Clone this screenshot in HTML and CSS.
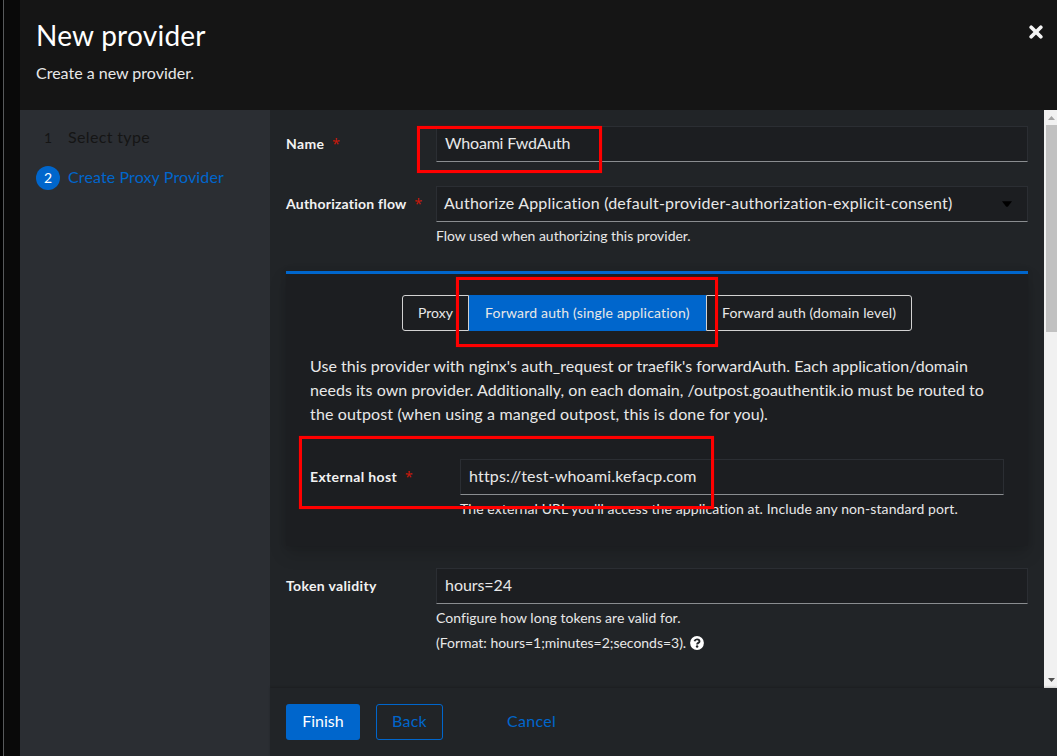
FILE: index.html
```html
<!DOCTYPE html>
<html lang="en">
<head>
<meta charset="utf-8">
<title>New provider</title>
<link rel="stylesheet" href="styles.css">
</head>
<body>
<div class="modal">
  <header class="header">
    <div>
      <h1 class="title">New provider</h1>
      <p class="subtitle">Create a new provider.</p>
    </div>
    <button class="close" aria-label="Close">
      <svg width="14" height="14" viewBox="0 0 14 14"><path d="M2.2 2.2 11.8 11.8M11.8 2.2 2.2 11.8" stroke="#f4f4f4" stroke-width="3.7" stroke-linecap="round"/></svg>
    </button>
  </header>
  <div class="body">
    <nav class="steps">
      <div class="step"><span class="num">1</span><span class="step-name ls-select">Select type</span></div>
      <div class="step current"><span class="num">2</span><span class="step-name ls-create">Create Proxy Provider</span></div>
    </nav>
    <section class="main">
      <div class="scroller">
        <form class="form">
          <div class="row">
            <label class="label ls-wide">Name<i class="req">*</i></label>
            <div class="control"><div class="input ls-whoami">Whoami FwdAuth</div></div>
          </div>
          <div class="row flow">
            <label class="label ls-mid">Authorization flow<i class="req">*</i></label>
            <div class="control">
              <div class="input select ls-authorize"><span>Authorize Application (default-provider-authorization-explicit-consent)</span>
                <svg class="caret" width="10" height="6" viewBox="0 0 10 6"><path d="M0 0.3h10L6 5.4Q5 6.3 4 5.4z" fill="#000"/></svg>
              </div>
              <p class="help ls-flow">Flow used when authorizing this provider.</p>
            </div>
          </div>
          <div class="card">
            <div class="toggle">
              <span class="item">Proxy</span><span class="item selected">Forward auth (single application)</span><span class="item last">Forward auth (domain level)</span>
            </div>
            <p class="description"><span class="ls-line1">Use this provider with nginx's auth_request or traefik's forwardAuth. Each application/domain</span><br><span class="ls-line2">needs its own provider. Additionally, on each domain, /outpost.goauthentik.io must be routed to</span><br><span class="ls-line3">the outpost (when using a manged outpost, this is done for you).</span></p>
            <div class="row">
              <label class="label ls-wide">External host<i class="req">*</i></label>
              <div class="control"><div class="input ls-host">https://test-whoami.kefacp.com</div>
              <p class="help ls-url">The external URL you'll access the application at. Include any non-standard port.</p></div>
            </div>
          </div>
          <div class="row">
            <label class="label ls-wide">Token validity</label>
            <div class="control">
              <div class="input ls-hours">hours=24</div>
              <p class="help ls-config">Configure how long tokens are valid for.</p>
              <p class="help format"><span>(Format: hours=1;minutes=2;seconds=3).</span>
                <svg width="14" height="14" viewBox="0 0 14 14"><circle cx="7" cy="7" r="6.9" fill="#fff"/><path d="M4.5 5.3C4.900 4 5.800 3.400 7 3.400c1.400 0 2.500.8 2.500 2C9.500 6.900 7.100 6.900 7.100 8.400" fill="none" stroke="#212427" stroke-width="1.900"/><circle cx="7.100" cy="10.400" r="1.250" fill="#212427"/></svg>
              </p>
            </div>
          </div>
        </form>
        <div class="scrollbar">
          <svg class="arrow" width="13" height="15" viewBox="0 0 13 15"><path d="M4 10 7.500 6 11 10z" fill="#a3a3a3"/></svg>
          <div class="thumb"></div>
          <svg class="arrow" width="13" height="15" viewBox="0 0 13 15"><path d="M4 5 7.500 9 11 5z" fill="#505050"/></svg>
        </div>
      </div>
      <footer class="footer">
        <button class="btn primary">Finish</button>
        <button class="btn secondary">Back</button>
        <button class="btn link">Cancel</button>
      </footer>
    </section>
  </div>
</div>
<div class="mark mark-name"></div>
<div class="mark mark-mode"></div>
<div class="mark mark-host"></div>
</body>
</html>
```
FILE: styles.css
```css
* { box-sizing: border-box; }
body {
  margin: 0;
  width: 1057px;
  height: 756px;
  overflow: hidden;
  display: flex;
  position: relative;
  background: linear-gradient(90deg, #000 3px, #57595b 3px 4px, #090909 4px);
  color: #e8e8e8;
  font: 16px/24px Lato, "Open Sans", sans-serif;
}
h1, p { margin: 0; font-weight: 400; }
button { font: inherit; border: 0; background: none; padding: 0; }
svg { display: block; flex: none; }

.modal { margin-left: 20px; flex: 1; display: flex; flex-direction: column; background: #212427; }
.header {
  height: 110px;
  padding: 14px 14px 0 16px;
  display: flex;
  justify-content: space-between;
  align-items: flex-start;
  background: #151515;
}
.title { font-size: 28px; line-height: 42px; color: #fff; letter-spacing: 0.25px; }
.subtitle { padding-top: 5px; }
.close { margin-top: 11px; }

.body { flex: 1; display: flex; min-height: 0; }
.steps { width: 250px; background: #2b2e33; padding: 16px; display: flex; flex-direction: column; gap: 16px; }
.step { display: flex; gap: 8px; color: #151515; height: 24px; }
.step-name { line-height: 22px; }
.num { width: 24px; height: 24px; border-radius: 50%; text-align: center; font-size: 14px; }
.current { color: #06c; }
.current .num { background: #06c; color: #fff; }

.main { flex: 1; display: flex; flex-direction: column; min-width: 0; }
.scroller { height: 578px; display: flex; }
.form { flex: 1; padding: 16px 16px 0; overflow: hidden; }
.row { display: grid; grid-template-columns: 150px 1fr; }
.flow { margin-top: 24px; }
.label { font-size: 14px; line-height: 21px; font-weight: 700; color: #f2f2f2; padding-top: 7px; }
.req { color: #c9190b; font: 400 14px/14px "Noto Sans", sans-serif; margin-left: 8px; }
.input {
  height: 36px;
  padding: 4px 8px;
  line-height: 24px;
  background: #1c1e21;
  border: 1px solid #2b2e33;
  border-bottom-color: #8a8d90;
}
.select { display: flex; align-items: flex-start; justify-content: space-between; padding: 4px 15px 4px 7px; }
.caret { margin-top: 10px; }
.help { font-size: 14px; line-height: 21px; padding: 3px 0 1px; }
.format { display: flex; align-items: center; gap: 4px; letter-spacing: -0.02px; }
.card {
  height: 275px;
  margin: 24px 0 22px;
  padding: 21px 24px 0;
  border-top: 3px solid #06c;
  background: #1c1e21;
  box-shadow: 0 8px 16px rgba(3, 3, 3, 0.16), 0 0 6px rgba(3, 3, 3, 0.08);
}
.toggle { display: flex; padding-left: 92px; font-size: 14px; }
.item { height: 36px; line-height: 34px; border: 1px solid #d2d2d2; padding: 0 15px; width: 67px; border-radius: 3px 0 0 3px; white-space: nowrap; }
.selected { width: 237px; background: #06c; border-color: #06c; border-radius: 0; letter-spacing: 0.19px; }
.last { width: 206px; border-radius: 0 3px 3px 0; letter-spacing: 0.15px; }
.description { padding: 23px 0 33px; white-space: nowrap; }

.scrollbar { width: 13px; background: #f1f1f1; display: flex; flex-direction: column; }
.thumb { height: 207px; margin: 0 0 341px 2px; background: #c1c1c1; }
.footer { flex: 1; padding: 16px; display: flex; align-items: flex-start; box-shadow: 0 -1px 2px rgba(3, 3, 3, 0.18); }
.btn { height: 36px; padding-bottom: 2px; border-radius: 3px; color: #06c; }
.primary { width: 74px; background: #06c; color: #fff; }
.secondary { width: 67px; margin-left: 16px; border: 1px solid #06c; letter-spacing: 0.26px; }
.link { margin-left: 64px; letter-spacing: 0.28px; }

.ls-wide { letter-spacing: 0.36px; }
.ls-mid { letter-spacing: 0.22px; }
.ls-select { letter-spacing: 0.35px; }
.ls-create { letter-spacing: 0.12px; }
.ls-whoami { letter-spacing: -0.2px; }
.ls-authorize { letter-spacing: 0.21px; }
.ls-flow { letter-spacing: -0.02px; }
.ls-line1 { letter-spacing: 0.045px; }
.ls-line2 { letter-spacing: 0.03px; }
.ls-line3 { letter-spacing: 0.14px; }
.ls-host { letter-spacing: 0.165px; }
.ls-url { letter-spacing: 0.1px; }
.ls-hours { letter-spacing: -0.05px; }
.ls-config { letter-spacing: 0.03px; }

/* highlight frames drawn over the form */
.mark { position: absolute; border: 3px solid #f00; box-shadow: 0 0 1px #a00000; }
.mark-name { left: 417px; top: 126px; width: 185px; height: 47px; }
.mark-mode { left: 456px; top: 277px; width: 262px; height: 70px; }
.mark-host { left: 299px; top: 436px; width: 415px; height: 73px; }
```
